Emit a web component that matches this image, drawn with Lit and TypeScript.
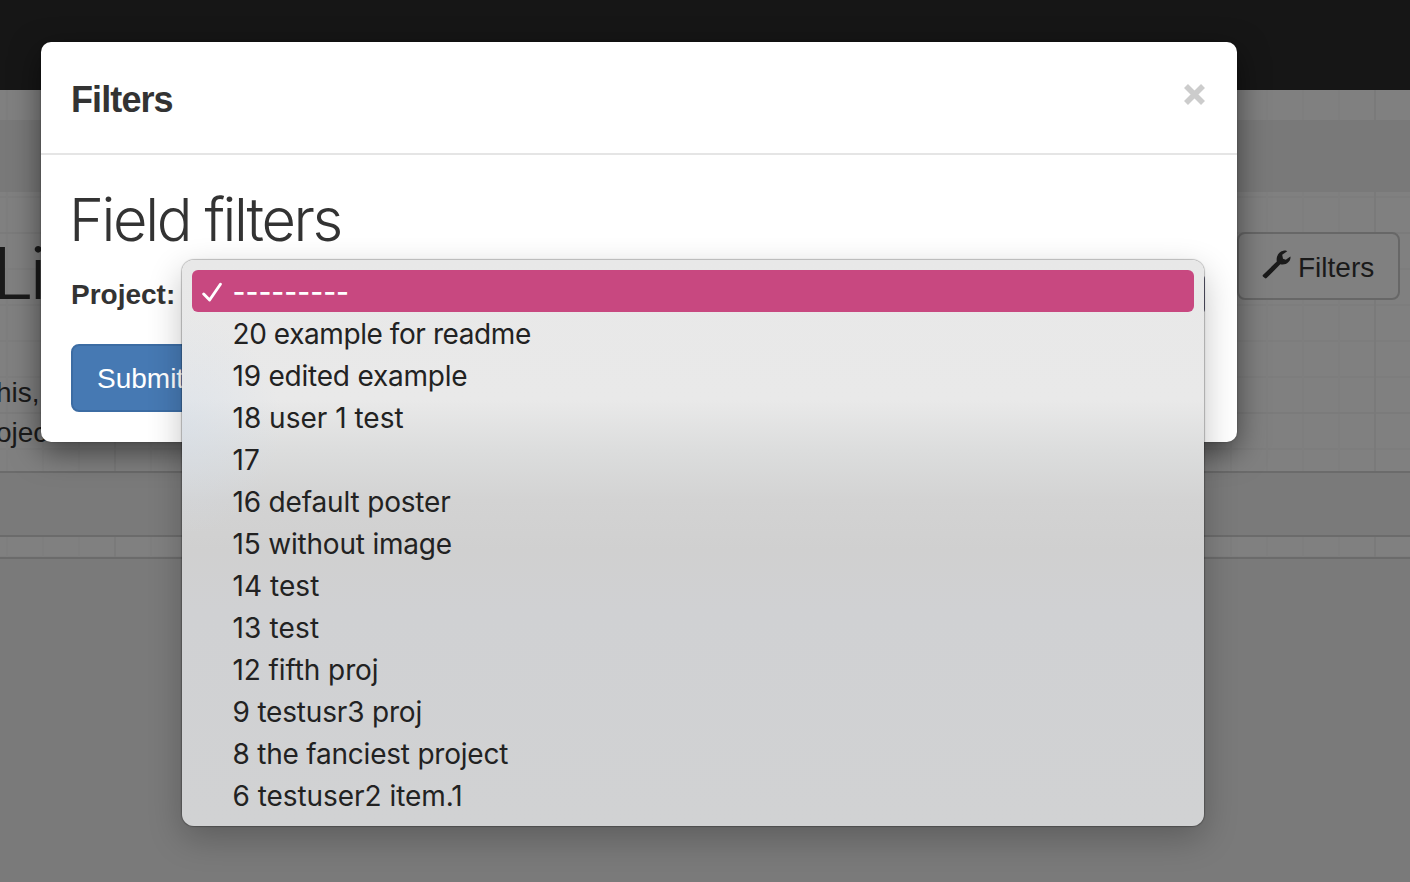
import { LitElement, html, css } from "lit";
import { customElement, property } from "lit/decorators.js";
import { classMap } from "lit/directives/class-map.js";
import { styleMap } from "lit/directives/style-map.js";

interface Option {
  text: string;
  tracking: number;
}

const OPTIONS: Option[] = [
  { text: "---------", tracking: 0 },
  { text: "20 example for readme", tracking: -0.42 },
  { text: "19 edited example", tracking: -0.22 },
  { text: "18 user 1 test", tracking: 0 },
  { text: "17", tracking: 0 },
  { text: "16 default poster", tracking: -0.17 },
  { text: "15 without image", tracking: -0.2 },
  { text: "14 test", tracking: 0.05 },
  { text: "13 test", tracking: 0.15 },
  { text: "12 fifth proj", tracking: -0.1 },
  { text: "9 testusr3 proj", tracking: -0.18 },
  { text: "8 the fanciest project", tracking: -0.22 },
  { text: "6 testuser2 item.1", tracking: -0.05 },
];

@customElement("option-menu")
class OptionMenu extends LitElement {
  @property({ type: Array }) options: Option[] = [];
  @property({ type: Number }) selected = 0;

  static styles = css`
    :host {
      display: block;
      box-sizing: border-box;
      padding: 10px;
      border-radius: 12px;
      font: 400 28px/44px Inter, sans-serif;
      color: #222;
      background:
        radial-gradient(ellipse 100px 110px at 0 165px, rgba(212, 222, 234, 0.5), transparent),
        linear-gradient(#e8e8e8 0, #e9e9e9 140px, #dcdddd 190px, #d3d3d3 240px, #d0d0d0 290px, #d0d1d3 350px, #d1d2d3 100%);
      box-shadow: 0 0 1px 1px rgba(0, 0, 0, 0.24), 0 12px 34px rgba(0, 0, 0, 0.24);
    }
    .option {
      display: grid;
      grid-template-columns: 30.5px 1fr;
      padding-left: 10px;
      height: 42px;
      white-space: pre;
    }
    .active {
      border-radius: 6px;
      background: #c84880;
      color: #fff;
      font-weight: 500;
    }
    .check {
      width: 20px;
      height: 20px;
      margin-top: 12px;
    }
  `;

  render() {
    return this.options.map((option, i) => {
      const on = i === this.selected;
      return html`<div class=${classMap({ option: true, active: on })}>
        ${on
          ? html`<svg class="check" viewBox="0 0 20 20" fill="none" stroke="#fff" stroke-width="2.9" stroke-linecap="round" stroke-linejoin="round">
              <path d="M1.7 12 7.6 18 18.4 2.2" />
            </svg>`
          : html`<span></span>`}
        <span style=${styleMap({ letterSpacing: `${option.tracking}px` })}>${option.text}</span>
      </div>`;
    });
  }
}

@customElement("filter-dialog")
class FilterDialog extends LitElement {
  static styles = css`
    :host {
      display: block;
      height: 400px;
      border-radius: 10px;
      background: #fff;
      color: #333;
      box-shadow: 0 10px 30px rgba(0, 0, 0, 0.5), 0 0 2px rgba(0, 0, 0, 0.3);
      font-family: "Liberation Sans", Arial, sans-serif;
    }
    .header {
      display: flex;
      justify-content: space-between;
      box-sizing: border-box;
      height: 113px;
      padding: 38px 32px 0 30px;
      border-bottom: 2px solid #e5e5e5;
    }
    .title {
      font-size: 36px;
      line-height: 40px;
      font-weight: 700;
      letter-spacing: -0.9px;
    }
    .close {
      width: 21px;
      height: 21px;
      margin-top: 4px;
    }
    .body {
      padding: 28px 30px 0;
    }
    .heading {
      font: 340 59.5px/72px Inter, "Liberation Sans", sans-serif;
      margin-left: -2px;
      letter-spacing: -2.4px;
      white-space: nowrap;
    }
    .row {
      margin-top: 20px;
      height: 40px;
      font-size: 28px;
      line-height: 40px;
      font-weight: 700;
    }
    .submit {
      display: block;
      box-sizing: border-box;
      margin-top: 29px;
      width: 138px;
      height: 68px;
      padding: 2px 24px 0;
      border: 2px solid #3c6ca3;
      border-radius: 8px;
      background: #4679b3;
      color: #fff;
      font: 28px/62px "Liberation Sans", Arial, sans-serif;
      text-align: left;
      white-space: nowrap;
    }
  `;

  render() {
    return html`
      <div class="header">
        <span class="title">Filters</span>
        <svg class="close" viewBox="0 0 21 21" stroke="#ccc" stroke-width="5.6">
          <path d="M2 2 19 19M19 2 2 19" />
        </svg>
      </div>
      <div class="body">
        <div class="heading">Field filters</div>
        <div class="row">Project:</div>
        <button class="submit">Submit</button>
      </div>
    `;
  }
}

@customElement("app-root")
class AppRoot extends LitElement {
  static styles = css`
    :host {
      display: block;
      position: relative;
      width: 1410px;
      height: 882px;
      overflow: hidden;
      font-family: "Liberation Sans", Arial, sans-serif;
      color: #1a1a1a;
    }
    .page {
      display: flex;
      flex-direction: column;
      height: 100%;
      background-color: #808080;
      background-image:
        linear-gradient(90deg, #7a7a7a 2px, transparent 2px),
        linear-gradient(#7b7b7b 2px, transparent 2px),
        linear-gradient(90deg, #7e7e7e 2px, transparent 2px),
        linear-gradient(#7d7d7d 2px, transparent 2px);
      background-size: 180px 180px, 180px 180px, 36px 36px, 36px 36px;
      background-position: 114px 0, 0 52px, 6px 0, 0 16px;
    }
    .navbar {
      height: 90px;
      background: #161616;
    }
    .crumbs {
      height: 72px;
      margin-top: 30px;
      background: #797979;
    }
    .content {
      display: flex;
      justify-content: space-between;
      align-items: flex-start;
      height: 279px;
    }
    .intro {
      padding-top: 41px;
      white-space: nowrap;
    }
    .pagetitle {
      font: 340 72px/80px Inter, "Liberation Sans", sans-serif;
      margin-left: -7px;
      letter-spacing: -4px;
    }
    .para {
      margin: 60px 0 0 -4px;
      font-size: 28px;
      line-height: 40px;
    }
    .filters {
      display: flex;
      align-items: center;
      gap: 7px;
      box-sizing: border-box;
      width: 163px;
      height: 68px;
      margin: 40px 10px 0 0;
      padding: 3px 0 0 23px;
      border: 2px solid #676767;
      border-radius: 8px;
      background: #808080;
      color: #1a1a1a;
      font: 28px "Liberation Sans", Arial, sans-serif;
    }
    .wrench {
      flex: none;
      width: 29px;
      height: 29px;
      margin-top: -6px;
    }
    .band {
      height: 62px;
      border-top: 2px solid #6b6b6b;
      border-bottom: 2px solid #6b6b6b;
      background: #7a7a7a;
    }
    .footer {
      flex: 1;
      margin-top: 20px;
      border-top: 2px solid #6b6b6b;
      background: #7a7a7a;
    }
    .dialog {
      position: absolute;
      left: 41px;
      top: 42px;
      width: 1196px;
    }
    .selectedge {
      position: absolute;
      left: 1196px;
      top: 275px;
      width: 9px;
      height: 38px;
      border-radius: 0 4px 4px 0;
      background: #626076;
    }
    .menu {
      position: absolute;
      left: 182px;
      top: 260px;
      width: 1022px;
      height: 566px;
    }
  `;

  render() {
    return html`
      <div class="page">
        <div class="navbar"></div>
        <div class="crumbs"></div>
        <div class="content">
          <div class="intro">
            <div class="pagetitle">Li</div>
            <div class="para">his,<br />ojects</div>
          </div>
          <button class="filters">
            <svg class="wrench" viewBox="0 0 29 29" fill="#1a1a1a">
              <path d="M.9 25.1 14.8 11.4C13.7 5.4 18 .3 23.9.6L25.2 1.2 20.2 4.7 21 8.8 23.8 9.7 28.4 6.5C29.3 11.2 24.4 15.8 18.3 14.3L4.6 28.1Q3.7 28.9 2.8 28.1L.9 26.5Q.3 25.8.9 25.1Z" />
            </svg>
            <span>Filters</span>
          </button>
        </div>
        <div class="band"></div>
        <div class="footer"></div>
      </div>
      <filter-dialog class="dialog"></filter-dialog>
      <div class="selectedge"></div>
      <option-menu class="menu" .options=${OPTIONS} .selected=${0}></option-menu>
    `;
  }
}
